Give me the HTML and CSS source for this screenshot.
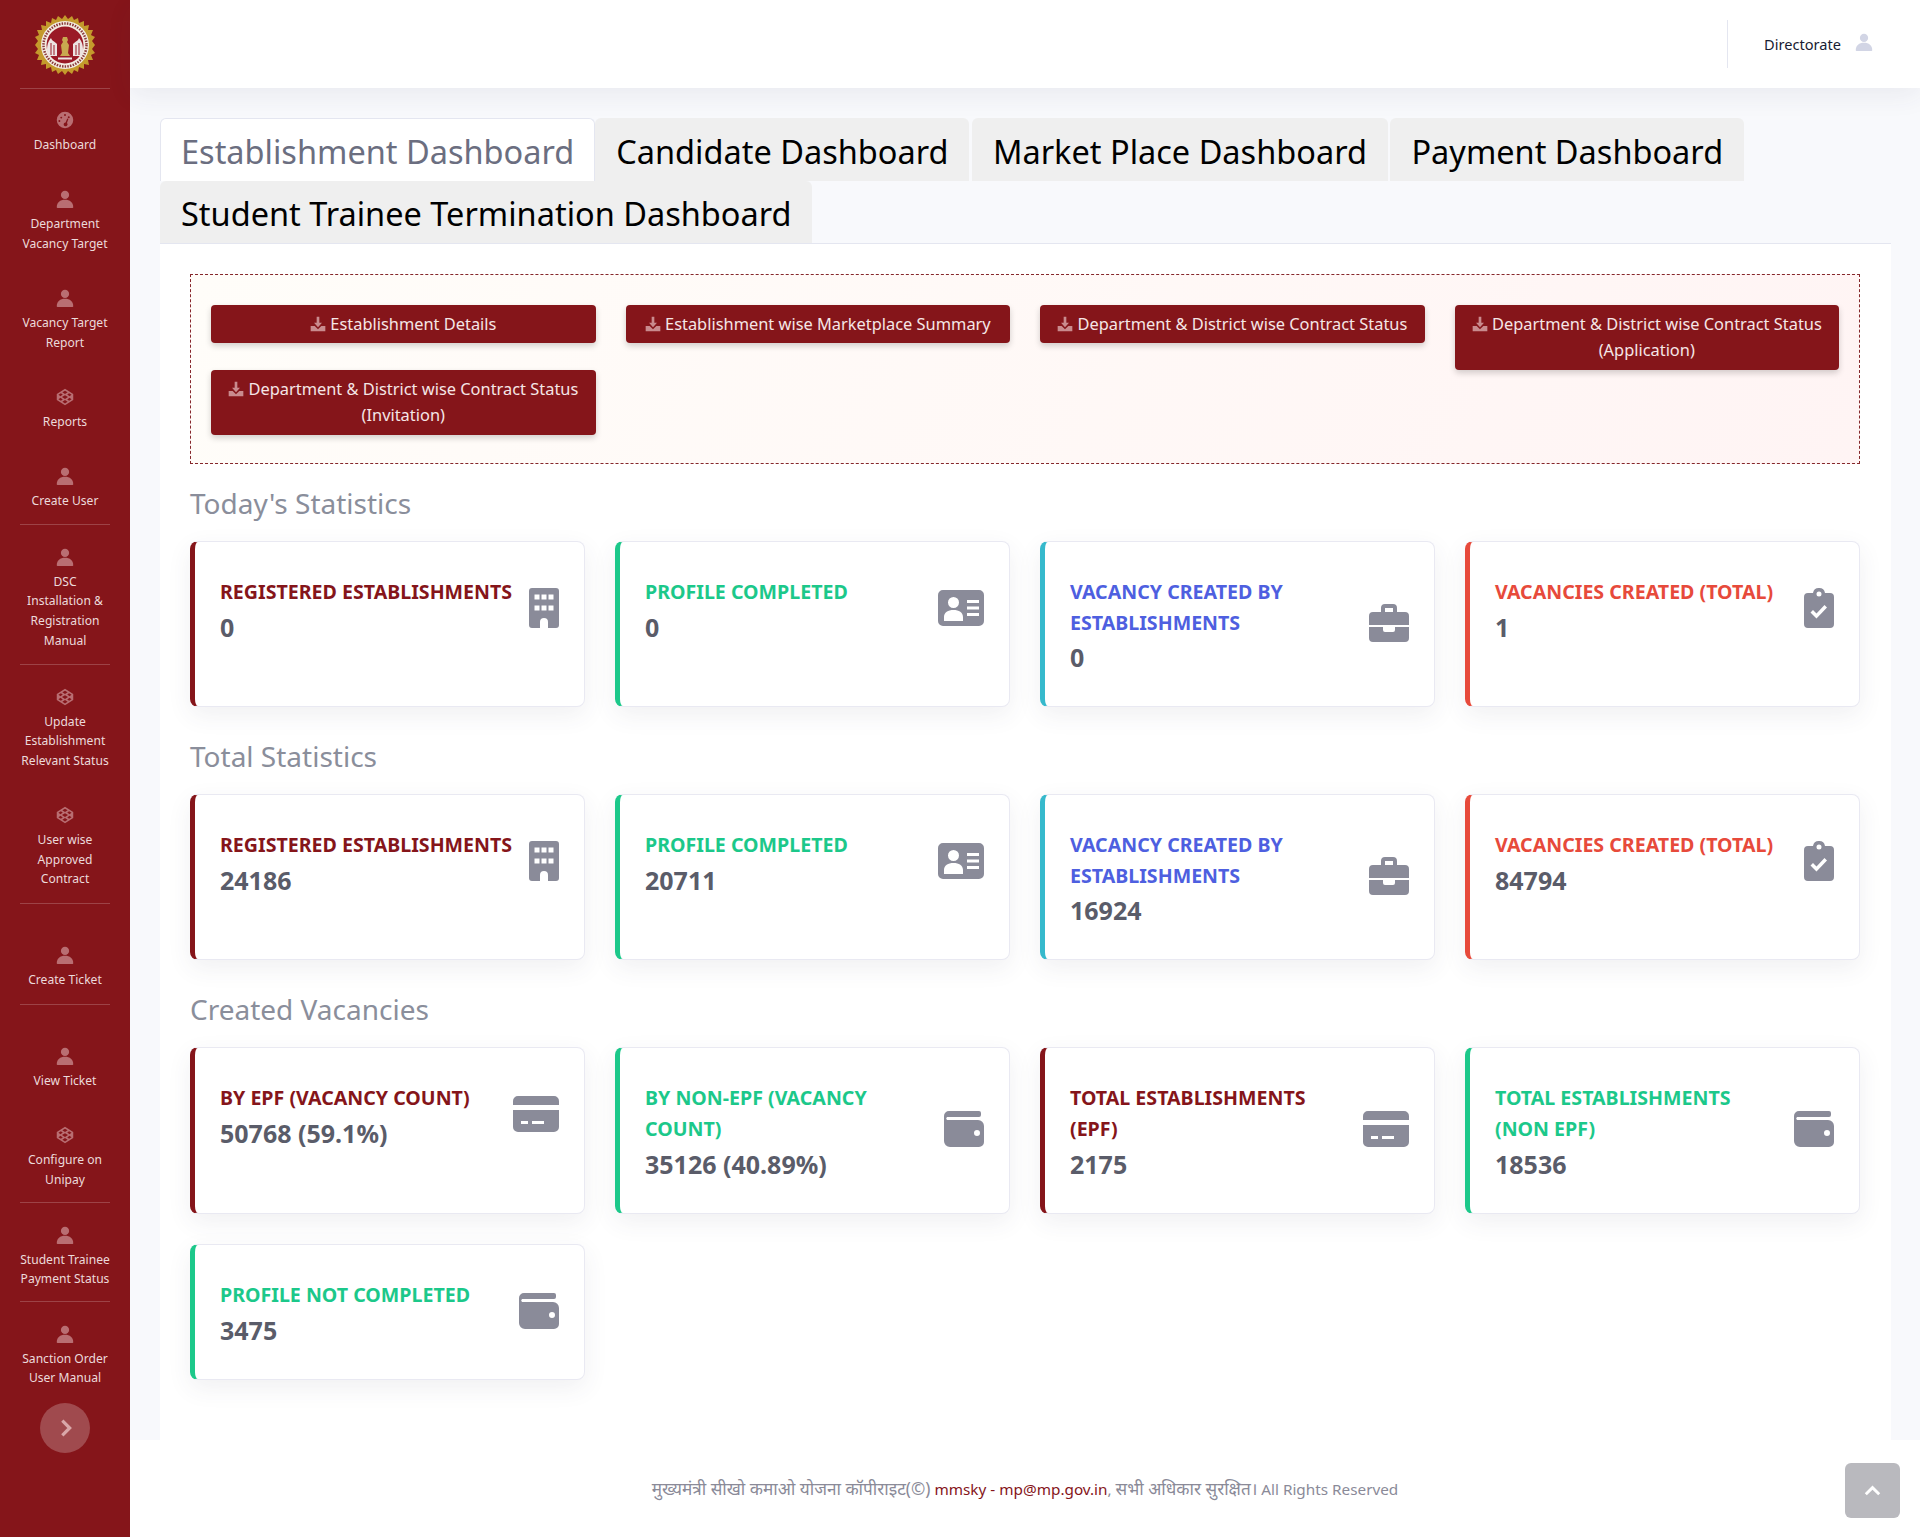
FILE: index.html
```html
<!DOCTYPE html>
<html lang="en">
<head>
<meta charset="utf-8">
<title>Establishment Dashboard</title>
<link rel="stylesheet" href="styles.css">
</head>
<body>
<svg class="defs" width="0" height="0" aria-hidden="true">
  <symbol id="user" viewBox="0 0 24 24"><circle cx="12" cy="6.5" r="5.5"/><path d="M1 23c0-6.5 4.500-10 11-10s11 3.500 11 10c0 .6-.4 1-1 1H2c-.6 0-1-.4-1-1z"/></symbol>
  <symbol id="gauge" viewBox="0 0 24 24"><path fill-rule="evenodd" d="M12 1a11 11 0 1 1 0 22 11 11 0 0 1 0-22zM7 7.500a1.300 1.300 0 1 0 0 2.600 1.300 1.300 0 0 0 0-2.600zM12 4a1.300 1.300 0 1 0 0 2.600A1.300 1.300 0 0 0 12 4zM4.500 12a1.300 1.300 0 1 0 0 2.600 1.300 1.300 0 0 0 0-2.600zM17 7a1.300 1.300 0 1 0 0 2.600A1.300 1.300 0 0 0 17 7zM15 10l-2.200 5.200a2.600 2.600 0 1 0 1.800.7L16.500 10.500z"/></symbol>
  <symbol id="cube" viewBox="0 0 24 24"><path fill-rule="evenodd" d="M12 1l11 7v8l-11 7-11-7V8zM12 3.500L8.500 5.800 12 8l3.500-2.200zM6.500 7L3.300 9 6 11l3-2.200zM17.500 7L15 8.800l3 2.200 2.700-2zM12 9.500L8 12l4 2.500 4-2.500zM6 13l-2.700 2 3.200 2 2.500-1.800zM18 13l-3 2.200 2.500 1.800 3.200-2zM12 16l-3.500 2.200L12 20.500l3.500-2.300z"/></symbol>
  <symbol id="download" viewBox="0 0 24 24"><path d="M10 1h4v9h4l-6 7-6-7h4z"/><path d="M1 15h6l5 5 5-5h6v8H1z"/></symbol>
  <symbol id="building" viewBox="0 0 30 40"><path fill-rule="evenodd" d="M3 0h24a3 3 0 0 1 3 3v34a3 3 0 0 1-3 3h-8v-6a4 4 0 0 0-8 0v6H3a3 3 0 0 1-3-3V3a3 3 0 0 1 3-3zM5.500 6.500v5h5v-5zM12.500 6.500v5h5v-5zM19.500 6.500v5h5v-5zM5.500 17.500v5h5v-5zM12.500 17.500v5h5v-5zM19.500 17.500v5h5v-5z"/></symbol>
  <symbol id="idcard" viewBox="0 0 46 36"><path fill-rule="evenodd" d="M5 0h36a5 5 0 0 1 5 5v26a5 5 0 0 1-5 5H5a5 5 0 0 1-5-5V5a5 5 0 0 1 5-5zM15.500 7a5.500 5.500 0 1 0 0 11 5.500 5.500 0 0 0 0-11zM6 31h19v-4c0-4.500-4-7-9.500-7S6 22.500 6 27zM29 10v3h12v-3zM29 16.500v3h12v-3zM29 23v3h12v-3z"/></symbol>
  <symbol id="briefcase" viewBox="0 0 40 38"><path fill-rule="evenodd" d="M12 8V4a4 4 0 0 1 4-4h8a4 4 0 0 1 4 4v4h8a4 4 0 0 1 4 4v9H0v-9a4 4 0 0 1 4-4zM16 4v4h8V4zM0 23h14v3a2 2 0 0 0 2 2h8a2 2 0 0 0 2-2v-3h14v11a4 4 0 0 1-4 4H4a4 4 0 0 1-4-4z"/></symbol>
  <symbol id="clipcheck" viewBox="0 0 30 40"><path fill-rule="evenodd" d="M15 0a6 6 0 0 1 6 5h5a4 4 0 0 1 4 4v27a4 4 0 0 1-4 4H4a4 4 0 0 1-4-4V9a4 4 0 0 1 4-4h5a6 6 0 0 1 6-5zM15 3.500a2.500 2.500 0 1 0 0 5 2.500 2.500 0 0 0 0-5zM23 19.500L20.500 17 12.500 25.500 9 22l-2.500 2.500 6 6z"/></symbol>
  <symbol id="creditcard" viewBox="0 0 46 36"><path fill-rule="evenodd" d="M5 0h36a5 5 0 0 1 5 5v4H0V5a5 5 0 0 1 5-5zM0 14h46v17a5 5 0 0 1-5 5H5a5 5 0 0 1-5-5zM8 25v3h7v-3zM19 25v3h12v-3z"/></symbol>
  <symbol id="wallet" viewBox="0 0 40 36"><path fill-rule="evenodd" d="M5 0h30a2 2 0 0 1 2 2v2a2 2 0 0 1-2 2H3a2 2 0 0 0 0 3h31a6 6 0 0 1 6 6v16a5 5 0 0 1-5 5H6a6 6 0 0 1-6-6V5a5 5 0 0 1 5-5zM33 19a3 3 0 1 0 0 6 3 3 0 0 0 0-6z"/></symbol>
</svg>

<aside class="sidebar">
  <div class="logo-wrap">
    <svg class="logo" viewBox="0 0 60 60" aria-label="Emblem">
      <polygon fill="#c49a2c" points="30,0 33,4 37,1 39,5 43,3 44,8 49,6 49,11 54,10 53,15 58,15 56,20 60,22 57,26 60,30 57,34 60,38 56,40 58,45 53,45 54,50 49,49 49,54 44,52 43,57 39,55 37,59 33,56 30,60 27,56 23,59 21,55 17,57 16,52 11,54 11,49 6,50 7,45 2,45 4,40 0,38 3,34 0,30 3,26 0,22 4,20 2,15 7,15 6,10 11,11 11,6 16,8 17,3 21,5 23,1 27,4"/>
      <circle cx="30" cy="30" r="24" fill="#f3ece2"/>
      <circle cx="30" cy="30" r="21.500" fill="none" stroke="#8a3a3a" stroke-width="2.500" stroke-dasharray="1.500 1.200"/>
      <circle cx="30" cy="30" r="18.500" fill="#9a1a26"/>
      <path fill="#ece4e2" d="M13 41c-2-6-1-14 3-18 1 3 3 3 6 6v12zM47 41c2-6 1-14-3-18-1 3-3 3-6 6v12z"/>
      <path fill="#9a1a26" d="M15.500 28h1v12h-1zM18.500 30h1v10h-1zM43.500 28h1v12h-1zM40.500 30h1v10h-1z"/>
      <path fill="#c9a84f" d="M28 22h4l1 3-1 2 2 3-1 8 2 3H25l2-3-1-8 2-3-1-2z"/>
      <path fill="#ece4e2" d="M23 42.500h14v2H23z"/>
    </svg>
  </div>
  <nav class="nav">
    <a class="nav-item first"><svg class="nav-icon"><use href="#gauge"/></svg><span>Dashboard</span></a>
    <a class="nav-item"><svg class="nav-icon"><use href="#user"/></svg><span>Department<br>Vacancy Target</span></a>
    <a class="nav-item"><svg class="nav-icon"><use href="#user"/></svg><span>Vacancy Target<br>Report</span></a>
    <a class="nav-item"><svg class="nav-icon"><use href="#cube"/></svg><span>Reports</span></a>
    <a class="nav-item ruled"><svg class="nav-icon"><use href="#user"/></svg><span>Create User</span></a>
    <a class="nav-item after-rule ruled"><svg class="nav-icon"><use href="#user"/></svg><span>DSC<br>Installation &amp;<br>Registration<br>Manual</span></a>
    <a class="nav-item after-rule"><svg class="nav-icon"><use href="#cube"/></svg><span>Update<br>Establishment<br>Relevant Status</span></a>
    <a class="nav-item ruled"><svg class="nav-icon"><use href="#cube"/></svg><span>User wise<br>Approved<br>Contract</span></a>
    <a class="nav-item wide ruled"><svg class="nav-icon"><use href="#user"/></svg><span>Create Ticket</span></a>
    <a class="nav-item wide"><svg class="nav-icon"><use href="#user"/></svg><span>View Ticket</span></a>
    <a class="nav-item ruled tight"><svg class="nav-icon"><use href="#cube"/></svg><span>Configure on<br>Unipay</span></a>
    <a class="nav-item after-rule ruled tight"><svg class="nav-icon"><use href="#user"/></svg><span>Student Trainee<br>Payment Status</span></a>
    <a class="nav-item after-rule"><svg class="nav-icon"><use href="#user"/></svg><span>Sanction Order<br>User Manual</span></a>
  </nav>
  <button class="toggle" aria-label="Expand"><svg viewBox="0 0 24 24"><path d="M8 4l8 8-8 8" fill="none" stroke="currentColor" stroke-width="3.500"/></svg></button>
</aside>

<div class="main">
  <header class="topbar">
    <div class="user-box">
      <span>Directorate</span>
      <svg class="user-icon"><use href="#user"/></svg>
    </div>
  </header>

  <div class="content">
    <div class="tabs">
      <a class="tab active">Establishment Dashboard</a>
      <a class="tab">Candidate Dashboard</a>
      <a class="tab">Market Place Dashboard</a>
      <a class="tab">Payment Dashboard</a>
      <a class="tab">Student Trainee Termination Dashboard</a>
    </div>
    <section class="panel">
      <div class="downloads">
        <button class="dl"><svg class="dl-icon"><use href="#download"/></svg> Establishment Details</button>
        <button class="dl"><svg class="dl-icon"><use href="#download"/></svg> Establishment wise Marketplace Summary</button>
        <button class="dl"><svg class="dl-icon"><use href="#download"/></svg> Department &amp; District wise Contract Status</button>
        <button class="dl"><svg class="dl-icon"><use href="#download"/></svg> Department &amp; District wise Contract Status (Application)</button>
        <button class="dl"><svg class="dl-icon"><use href="#download"/></svg> Department &amp; District wise Contract Status (Invitation)</button>
      </div>

      <h2 class="section-title">Today's Statistics</h2>
      <div class="cards">
        <article class="card maroon"><div class="card-body"><div><h3>REGISTERED ESTABLISHMENTS</h3><p>0</p></div><svg class="ic ic-30"><use href="#building"/></svg></div></article>
        <article class="card green"><div class="card-body"><div><h3>PROFILE COMPLETED</h3><p>0</p></div><svg class="ic ic-46"><use href="#idcard"/></svg></div></article>
        <article class="card cyan"><div class="card-body"><div><h3>VACANCY CREATED BY ESTABLISHMENTS</h3><p>0</p></div><svg class="ic ic-40"><use href="#briefcase"/></svg></div></article>
        <article class="card red"><div class="card-body"><div><h3>VACANCIES CREATED (TOTAL)</h3><p>1</p></div><svg class="ic ic-30"><use href="#clipcheck"/></svg></div></article>
      </div>

      <h2 class="section-title">Total Statistics</h2>
      <div class="cards">
        <article class="card maroon"><div class="card-body"><div><h3>REGISTERED ESTABLISHMENTS</h3><p>24186</p></div><svg class="ic ic-30"><use href="#building"/></svg></div></article>
        <article class="card green"><div class="card-body"><div><h3>PROFILE COMPLETED</h3><p>20711</p></div><svg class="ic ic-46"><use href="#idcard"/></svg></div></article>
        <article class="card cyan"><div class="card-body"><div><h3>VACANCY CREATED BY ESTABLISHMENTS</h3><p>16924</p></div><svg class="ic ic-40"><use href="#briefcase"/></svg></div></article>
        <article class="card red"><div class="card-body"><div><h3>VACANCIES CREATED (TOTAL)</h3><p>84794</p></div><svg class="ic ic-30"><use href="#clipcheck"/></svg></div></article>
      </div>

      <h2 class="section-title">Created Vacancies</h2>
      <div class="cards">
        <article class="card maroon"><div class="card-body"><div><h3>BY EPF (VACANCY COUNT)</h3><p>50768 (59.1%)</p></div><svg class="ic ic-46"><use href="#creditcard"/></svg></div></article>
        <article class="card green"><div class="card-body"><div><h3>BY NON-EPF (VACANCY COUNT)</h3><p>35126 (40.89%)</p></div><svg class="ic ic-40"><use href="#wallet"/></svg></div></article>
        <article class="card maroon"><div class="card-body"><div><h3>TOTAL ESTABLISHMENTS (EPF)</h3><p>2175</p></div><svg class="ic ic-46"><use href="#creditcard"/></svg></div></article>
        <article class="card green"><div class="card-body"><div><h3>TOTAL ESTABLISHMENTS (NON EPF)</h3><p>18536</p></div><svg class="ic ic-40"><use href="#wallet"/></svg></div></article>
        <article class="card green"><div class="card-body"><div><h3>PROFILE NOT COMPLETED</h3><p>3475</p></div><svg class="ic ic-40"><use href="#wallet"/></svg></div></article>
      </div>
    </section>
  </div>

  <footer class="footer">
    <span><span class="hi">मुख्यमंत्री सीखो कमाओ योजना कॉपीराइट(©)</span> <a>mmsky - mp@mp.gov.in</a>, <span class="hi">सभी अधिकार सुरक्षित।</span> All Rights Reserved</span>
  </footer>
  <button class="to-top" aria-label="Back to top"><svg viewBox="0 0 24 24"><path d="M5 16l7-7 7 7" fill="none" stroke="currentColor" stroke-width="3"/></svg></button>
</div>
</body>
</html>
```
FILE: styles.css
```css
* { box-sizing: border-box; }
html, body { margin: 0; padding: 0; }
body {
  display: flex;
  width: 1920px;
  height: 1537px;
  overflow: hidden;
  background: #fff;
  font-family: "Noto Sans", "Open Sans", sans-serif;
  color: #181c32;
}
.defs { position: absolute; }

/* Sidebar */
.sidebar {
  width: 130px;
  flex: none;
  height: 1537px;
  background: #85151a;
  display: flex;
  flex-direction: column;
  align-items: center;
}
.logo-wrap {
  width: 90px;
  height: 89px;
  padding-top: 15px;
  border-bottom: 1px solid rgba(255, 255, 255, .2);
  display: flex;
  justify-content: center;
  flex: none;
}
.logo { width: 60px; height: 60px; }
.nav { display: flex; flex-direction: column; align-items: center; width: 100%; }
.nav-item {
  width: 90px;
  margin-top: 34.500px;
  display: flex;
  flex-direction: column;
  align-items: center;
  text-align: center;
  color: #ecdadb;
  font-size: 12.100px;
  line-height: 19.600px;
  white-space: nowrap;
}
.nav-item.first { margin-top: 21.200px; }
.nav-item.ruled { padding-bottom: 14px; border-bottom: 1px solid rgba(255, 255, 255, .2); }
.nav-item.ruled.tight { padding-bottom: 12.500px; }
.nav-item.after-rule { margin-top: 21.500px; }
.nav-item.wide { margin-top: 41.500px; }
.nav-icon { width: 18px; height: 18px; margin: 1px 0 6px; fill: #b96e72; }
.toggle {
  width: 50px;
  height: 50px;
  margin-top: 14.500px;
  border: 0;
  border-radius: 50%;
  background: #a04a4e;
  color: #d9a7a9;
  padding: 14px 13px 14px 15px;
  flex: none;
}
.toggle svg { display: block; width: 22px; height: 22px; }

/* Main column */
.main {
  flex: 1;
  min-width: 0;
  display: flex;
  flex-direction: column;
  position: relative;
  background: #f8f9fc;
}
.topbar {
  height: 88px;
  flex: none;
  background: #fff;
  box-shadow: 0 8px 24px rgba(60, 60, 90, .07);
  display: flex;
  justify-content: flex-end;
  align-items: center;
  position: relative;
  z-index: 1;
}
.user-box {
  display: flex;
  align-items: center;
  gap: 14px;
  height: 48px;
  padding: 0 47px 0 36px;
  margin-top: -1px;
  border-left: 1px solid #e4e6f0;
  font-size: 14.600px;
  color: #181c32;
}
.user-icon { width: 18px; height: 18px; margin-top: -4px; fill: #d2d5e5; }

.content {
  flex: 1;
  min-height: 0;
  padding: 30px 29px 0 30px;
  display: flex;
  flex-direction: column;
}
.tabs {
  display: flex;
  flex-wrap: wrap;
  border-bottom: 1px solid #e4e6f0;
  flex: none;
}
.tab {
  padding: 10.500px 21px 6px;
  font-size: 32.500px;
  line-height: 46px;
  background: #efefef;
  color: #000;
  margin-right: 2.500px;
  border-radius: 6px 6px 0 0;
}
.tab.active {
  background: #fff;
  color: #6b6e80;
  padding: 9.500px 20px 6px;
  border: 1px solid #e4e6f0;
  border-bottom: 0;
  margin-right: 0;
}
.panel {
  flex: 1;
  background: #fff;
  padding: 30px 31px 30px 30px;
}
.downloads {
  height: 190px;
  border: 1px dashed #85272b;
  background: linear-gradient(120deg, #fffdf9, #fff4f4);
  padding: 30px 20px;
  display: grid;
  grid-template-columns: repeat(4, 1fr);
  gap: 0 30px;
  align-items: start;
}
.dl {
  border: 0;
  border-radius: 4px;
  background: #85151a;
  color: #f5e6e6;
  font: inherit;
  font-size: 16.400px;
  line-height: 26.400px;
  padding: 6px 12px;
  text-align: center;
  box-shadow: 0 3px 6px rgba(0, 0, 0, .18);
}
.dl-icon { width: 16px; height: 16px; fill: #c98b8e; vertical-align: -2px; }
.section-title {
  margin: 19px 0 0;
  font-size: 28px;
  font-weight: 400;
  line-height: 40px;
  color: #8a8e9b;
}
.cards {
  display: grid;
  grid-template-columns: repeat(4, 1fr);
  gap: 30.600px 30px;
  margin-top: 18px;
}
.cards + .section-title { margin-top: 29px; }
.card {
  padding: 35px 25px 30px;
  background: #fff;
  border: 1px solid #e9e9f2;
  border-left-width: 5px;
  border-radius: 8px;
  box-shadow: 0 8px 24px rgba(60, 60, 90, .08);
}
.card-body {
  display: flex;
  align-items: center;
  justify-content: space-between;
  gap: 10px;
}
.card.maroon { border-left-color: #85151a; }
.card.green { border-left-color: #1cc88a; }
.card.cyan { border-left-color: #36b9cc; }
.card.red { border-left-color: #e74a3b; }
.card h3 { margin: 0; font-size: 19.600px; line-height: 30.600px; font-weight: 700; }
.card p { margin: 0; font-size: 25px; line-height: 38px; font-weight: 700; color: #5a5c69; }
.card.maroon h3 { color: #85151a; }
.card.green h3 { color: #1cc88a; }
.card.cyan h3 { color: #4e5fe0; }
.card.red h3 { color: #e74a3b; }
.ic { fill: #8a8b99; flex: none; margin-top: -7px; }
.ic-30 { width: 30px; height: 40px; }
.ic-40 { width: 40px; height: 38px; }
.ic-46 { width: 46px; height: 36px; }

/* Footer */
.footer {
  height: 97px;
  flex: none;
  background: #fff;
  display: flex;
  align-items: center;
  justify-content: center;
  font-size: 15.300px;
  color: #8a8a98;
  font-family: "Noto Sans", "Liberation Sans", sans-serif;
}
.footer .hi { font-size: 17.200px; }
.footer a { color: #85151a; }
.to-top {
  position: absolute;
  right: 20px;
  bottom: 19px;
  width: 55px;
  height: 55px;
  border: 0;
  border-radius: 6px;
  background: #b9b9be;
  color: #fff;
  padding: 16px;
}
.to-top svg { display: block; width: 23px; height: 23px; }
```
